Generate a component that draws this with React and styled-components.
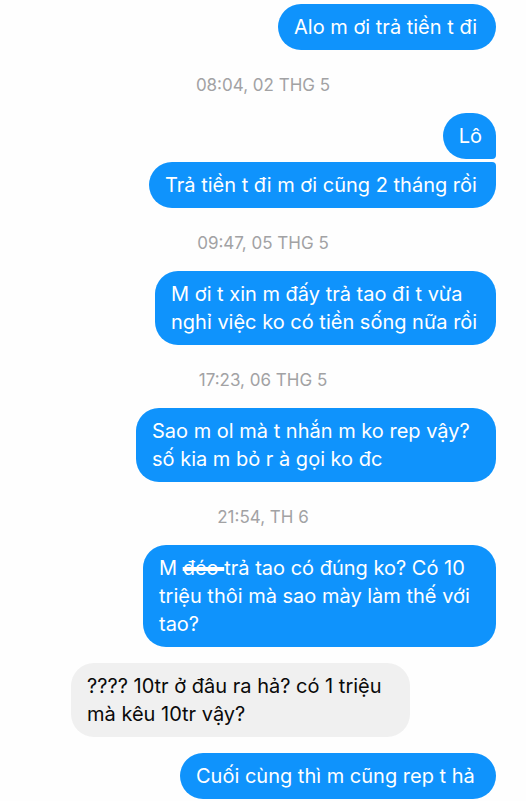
import React from "react";
import styled, { createGlobalStyle } from "styled-components";

const GlobalStyle = createGlobalStyle`
  * { box-sizing: border-box; }
  body { margin: 0; background: #fefefe; font-family: Inter, "Noto Sans", sans-serif; }
`;

const Chat = styled.main`
  display: flex;
  flex-direction: column;
  align-items: flex-end;
  padding: 4px 30px 2px;
`;

const Bubble = styled.p`
  margin: 0;
  min-width: ${(p) => p.$width || "0"};
  padding: 9px 14px 9px 16px;
  border-radius: ${(p) => p.$corners || "23px"};
  background: #0f93fc;
  color: #fff;
  font-size: 20px;
  line-height: 28px;
`;

const Group = styled.section`
  display: flex;
  flex-direction: column;
  align-items: flex-end;
  gap: 3px;
`;

const Received = styled(Bubble)`
  align-self: flex-start;
  margin: 16px 0 16px 41px;
  background: #f0f0f0;
  color: #0a0a0a;
`;

const Stamp = styled.time`
  align-self: center;
  margin: 25px 0 18px;
  color: #a2a2a4;
  font-size: 17px;
  line-height: 20px;
`;

const Struck = styled.s`
  text-decoration-thickness: 4px;
`;

export default function App() {
  return (
    <>
      <GlobalStyle />
      <Chat>
        <Bubble $width="218px">Alo m ơi trả tiền t đi</Bubble>
        <Stamp>08:04, 02 THG 5</Stamp>
        <Group>
          <Bubble $corners="23px 23px 4px 23px">Lô</Bubble>
          <Bubble $corners="23px 4px 23px 23px" $width="347px">Trả tiền t đi m ơi cũng 2 tháng rồi</Bubble>
        </Group>
        <Stamp>09:47, 05 THG 5</Stamp>
        <Bubble $width="341px">M ơi t xin m đấy trả tao đi t vừa<br />nghỉ việc ko có tiền sống nữa rồi</Bubble>
        <Stamp>17:23, 06 THG 5</Stamp>
        <Bubble $width="360px">Sao m ol mà t nhắn m ko rep vậy?<br />số kia m bỏ r à gọi ko đc</Bubble>
        <Stamp>21:54, TH 6</Stamp>
        <Bubble $width="353px">M <Struck>đéo </Struck>trả tao có đúng ko? Có 10<br />triệu thôi mà sao mày làm thế với<br />tao?</Bubble>
        <Received $width="339px">???? 10tr ở đâu ra hả? có 1 triệu<br />mà kêu 10tr vậy?</Received>
        <Bubble $width="316px">Cuối cùng thì m cũng rep t hả</Bubble>
      </Chat>
    </>
  );
}
